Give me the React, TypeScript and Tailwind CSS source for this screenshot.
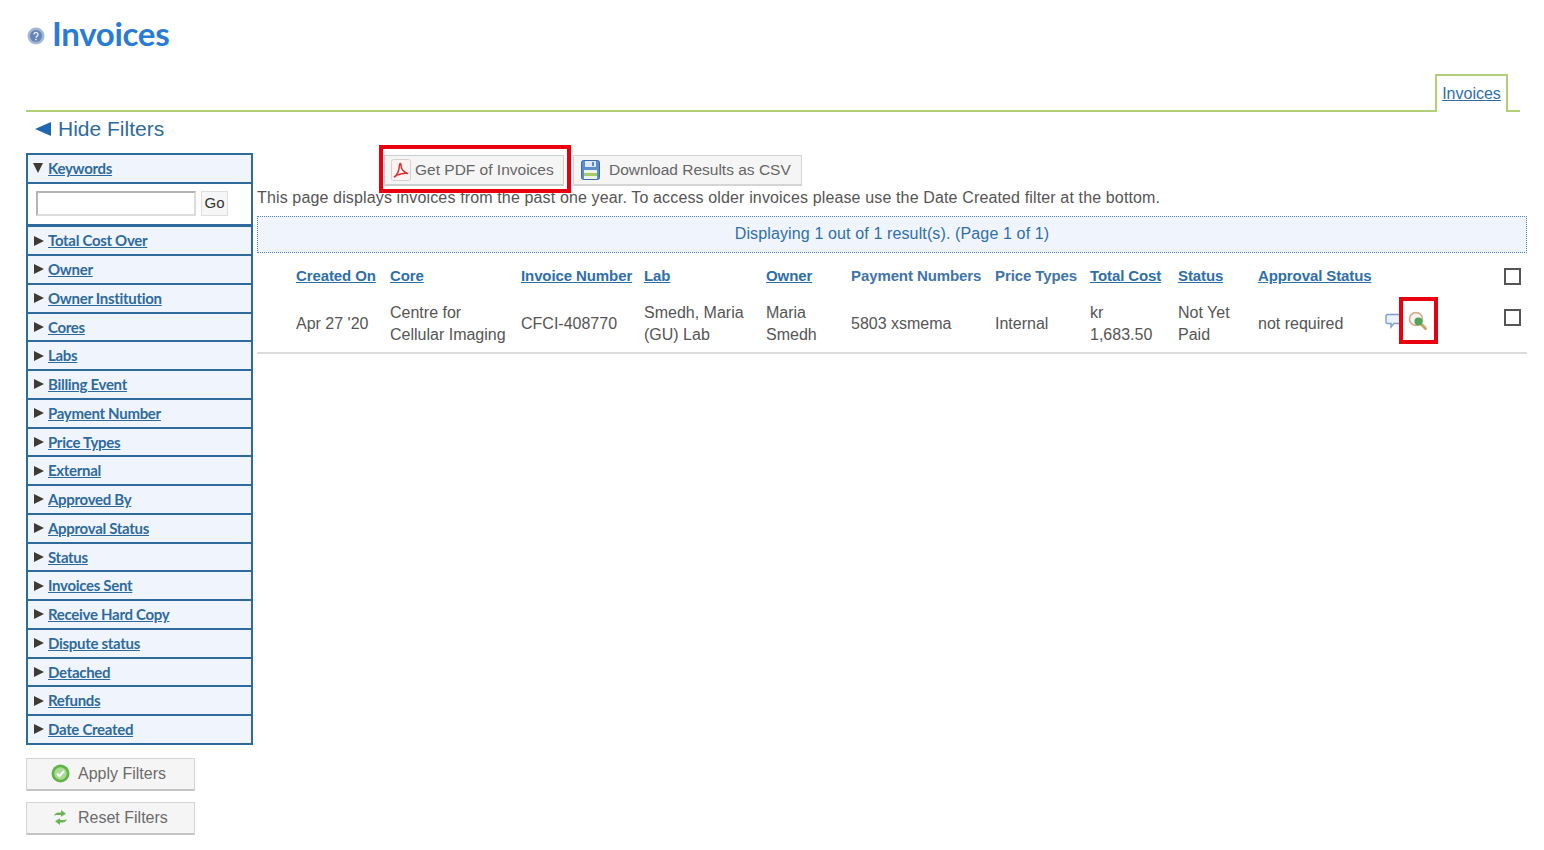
const filters = [
  "Total Cost Over",
  "Owner",
  "Owner Institution",
  "Cores",
  "Labs",
  "Billing Event",
  "Payment Number",
  "Price Types",
  "External",
  "Approved By",
  "Approval Status",
  "Status",
  "Invoices Sent",
  "Receive Hard Copy",
  "Dispute status",
  "Detached",
  "Refunds",
  "Date Created",
];

const HelpIcon = () => (
  <svg width="18" height="18" viewBox="0 0 18 18">
    <circle cx="9" cy="9" r="8.5" fill="#a3b6d6" />
    <circle cx="9" cy="9" r="6" fill="#6484b6" />
    <path d="M7 7.4a2 2 0 1 1 3 1.8c-.7.4-1 .7-1 1.5" fill="none" stroke="#e8eef7" strokeWidth="1.4" />
    <circle cx="9" cy="12.6" r=".9" fill="#e8eef7" />
  </svg>
);

const PdfIcon = () => (
  <svg width="20" height="22" viewBox="0 0 20 22">
    <rect x=".5" y=".5" width="19" height="21" rx="2" fill="#fbf4f3" stroke="#d9cfcf" />
    <path d="M3 18c3-1.500 5-6 5.500-12 .2-2 1.500-2 1.500 0 0 4 3 8 7 8.500-3-1-8 .5-11 1.500-1 .5-2 2-3 2z" fill="none" stroke="#d8322c" strokeWidth="1.500" />
  </svg>
);

const SaveIcon = () => (
  <svg width="19" height="20" viewBox="0 0 19 20">
    <rect x=".5" y=".5" width="18" height="19" rx="2" fill="#5b8dcc" stroke="#3c6aa8" />
    <rect x="4" y="1" width="11" height="6" fill="#dfe9f5" />
    <rect x="11" y="2" width="2" height="4" fill="#5b8dcc" />
    <rect x="3" y="10" width="13" height="9" fill="#eef4e6" />
    <rect x="3" y="13" width="13" height="3" fill="#a5cb6c" />
  </svg>
);

const CheckIcon = () => (
  <svg width="19" height="19" viewBox="0 0 19 19">
    <circle cx="9.500" cy="9.500" r="9" fill="#62b34a" />
    <circle cx="9.500" cy="9.500" r="6.200" fill="#a9dc93" />
    <path d="M6 9.500l2.500 2.500 4.500-5" fill="none" stroke="#fff" strokeWidth="2" />
  </svg>
);

const ResetIcon = () => (
  <svg width="15" height="17" viewBox="0 0 15 17">
    <path d="M1 6.500c1-2.500 3-3 7-3V1l5 3.800-5 3V6c-3 0-5 0-7 .5z" fill="#6cb356" />
    <path d="M14 10.500c-1 2.500-3 3-7 3V16l-5-3.800 5-3V11c3 0 5 0 7-.5z" fill="#6cb356" />
  </svg>
);

const CommentIcon = () => (
  <svg width="16" height="16" viewBox="0 0 16 16">
    <path d="M2.500 1.500h11a1.500 1.500 0 0 1 1.500 1.500v6a1.500 1.500 0 0 1-1.500 1.500H9L6 14v-3.500H2.500A1.500 1.500 0 0 1 1 9V3a1.500 1.500 0 0 1 1.500-1.500z" fill="#eaf1fb" stroke="#7f9fca" strokeWidth="1.400" />
  </svg>
);

const ViewIcon = () => (
  <svg width="20" height="20" viewBox="0 0 20 20">
    <path d="M12 12l5.500 5.500" stroke="#c9a063" strokeWidth="3" strokeLinecap="round" />
    <circle cx="8" cy="8" r="6.500" fill="#f6f3ee" stroke="#d3a98c" strokeWidth="1.500" />
    <circle cx="10.500" cy="10.500" r="4" fill="#4fa35a" />
  </svg>
);

const Triangle = ({ open }: { open?: boolean }) =>
  open ? (
    <span className="h-0 w-0 border-x-[5px] border-t-[10px] border-x-transparent border-t-[#3f3a33]" />
  ) : (
    <span className="ml-[1px] h-0 w-0 border-y-[5px] border-l-[10px] border-y-transparent border-l-[#3f3a33]" />
  );

const FilterRow = ({ label, open }: { label: string; open?: boolean }) => (
  <div className="flex h-[28.76px] items-center gap-[5px] border-b-2 border-[#2f6a9c] bg-[#f0f5fd] pl-[5px] last:h-[26.5px] last:border-b-0">
    <span className="flex w-[10px] justify-center"><Triangle open={open} /></span>
    <a className="font-['Lato',sans-serif] text-[15px] font-bold tracking-[-0.3px] text-[#2f6a9c] underline" href="#">
      {label}
    </a>
  </div>
);

const SideButton = ({ icon, label }: { icon: React.ReactNode; label: string }) => (
  <button className="flex h-[33px] w-[169px] items-center rounded-[1px] border border-[#d4d4d4] border-b-2 border-b-[#c4c4c4] bg-[#f5f5f5] text-[16px] text-[#6b6b6b]">
    <span className="flex w-[51px] justify-center pl-[15px]">{icon}</span>
    <span>{label}</span>
  </button>
);

const columns = [
  "Created On",
  "Core",
  "Invoice Number",
  "Lab",
  "Owner",
  "Payment Numbers",
  "Price Types",
  "Total Cost",
  "Status",
  "Approval Status",
];

const gridCols = "grid grid-cols-[133px_131px_123px_122px_85px_144px_95px_88px_80px_127px_119px_23px]";

const Box = () => <span className="block h-[17px] w-[17px] border-2 border-[#555] bg-white" />;

export default function App() {
  return (
    <div className="relative h-[850px] w-[1544px] overflow-hidden bg-white font-['Liberation_Sans',Arial,sans-serif] text-[16px] text-[#555]">
      <div className="flex h-[74px] items-start pl-[27px] pt-[12px]">
        <span className="mt-[15px]"><HelpIcon /></span>
        <h1 className="ml-[7px] font-['Lato',sans-serif] text-[33px] font-bold leading-[42px] tracking-[-0.3px] text-[#2a7bd3]">Invoices</h1>
      </div>

      <div className="ml-[26px] flex h-[38px] w-[1494px] justify-end border-b-2 border-[#b1cf74] pr-[12px]">
        <a className="flex h-[38px] w-[73px] items-center justify-center border-2 border-b-0 border-[#b1cf74] bg-white text-[#2f6fa8] underline" href="#">
          Invoices
        </a>
      </div>

      <div className="ml-[35px] mt-[3px] flex h-[28px] items-center gap-[7px] text-[#2f6a9c]">
        <span className="h-0 w-0 border-y-[7px] border-r-[16px] border-y-transparent border-r-[#1f68b0]" />
        <span className="text-[21px]">Hide Filters</span>
      </div>

      <div className="mt-[10px] flex pl-[26px]">
        <aside className="w-[227px] shrink-0">
          <div className="border-2 border-[#2f6a9c]">
            <FilterRow label="Keywords" open />
            <div className="flex h-[43.5px] items-start gap-[5px] border-b-[3px] border-[#2f6a9c] bg-white pl-[8px] pt-[7px]">
              <input className="h-[25px] w-[160px] border-2 border-[#b5b5b5] border-b-[#dcdcdc] border-r-[#dcdcdc] bg-white" />
              <button className="flex h-[25px] w-[27px] items-center justify-center border border-[#dedede] bg-[#f6f6f6] text-[15px] text-[#333]">Go</button>
            </div>
            {filters.map((f) => (
              <FilterRow key={f} label={f} />
            ))}
          </div>
          <div className="mt-[13px] flex flex-col gap-[11px]">
            <SideButton icon={<CheckIcon />} label="Apply Filters" />
            <SideButton icon={<ResetIcon />} label="Reset Filters" />
          </div>
        </aside>

        <main className="ml-[4px] mt-[1px] w-[1270px] shrink-0">
          <div className="flex h-[33px] items-center gap-[9px] pl-[127px] text-[15.500px]">
            <button className="flex h-[31px] w-[180px] items-center gap-[4px] border border-[#c7cfd2] border-b-2 bg-[#f5f5f5] pl-[6px] text-[#666]">
              <PdfIcon />
              Get PDF of Invoices
            </button>
            <button className="flex h-[31px] w-[229px] items-center gap-[9px] border border-[#d4d4d4] border-b-2 bg-[#f5f5f5] pl-[7px] text-[#666]">
              <SaveIcon />
              Download Results as CSV
            </button>
          </div>
          <p className="h-[22px] leading-[22px] tracking-[0.14px]">
            This page displays invoices from the past one year. To access older invoices please use the Date Created filter at the bottom.
          </p>
          <div className="mt-[7px] flex h-[37px] items-center justify-center border border-dotted border-[#4f82b4] bg-[#f0f5fd] pb-[2px] tracking-[0.13px] text-[#2f6fa8]">
            Displaying 1 out of 1 result(s). (Page 1 of 1)
          </div>

          <div className={`${gridCols} mt-[11px] h-[24px] items-center text-[15px] font-bold tracking-[-0.1px] text-[#2f6fa8]`}>
            {columns.map((c, i) => (
              <div key={c} className={i === 0 ? "pl-[39px]" : ""}>
                {c === "Payment Numbers" || c === "Price Types" ? (
                  <span className="text-[#3f74a8]">{c}</span>
                ) : (
                  <a className="underline" href="#">{c}</a>
                )}
              </div>
            ))}
            <div />
            <Box />
          </div>

          <div className={`${gridCols} mt-[11px] h-[55px] items-center border-b-2 border-[#dcdcdc] pb-[3px] leading-[22px]`}>
            <div className="pl-[39px]">Apr 27 '20</div>
            <div>Centre for<br />Cellular Imaging</div>
            <div>CFCI-408770</div>
            <div>Smedh, Maria<br />(GU) Lab</div>
            <div>Maria<br />Smedh</div>
            <div>5803 xsmema</div>
            <div>Internal</div>
            <div>kr<br />1,683.50</div>
            <div>Not Yet<br />Paid</div>
            <div>not required</div>
            <div className="flex items-center gap-[7px] pb-[6px]">
              <CommentIcon />
              <ViewIcon />
            </div>
            <div className="pb-[13px]"><Box /></div>
          </div>
        </main>
      </div>

      {/* red annotation boxes */}
      <div className="absolute left-[379px] top-[145px] h-[48px] w-[192px] border-[4px] border-[#e8000f]" />
      <div className="absolute left-[1399px] top-[297px] h-[47px] w-[39px] border-[4px] border-[#e8000f]" />
    </div>
  );
}
